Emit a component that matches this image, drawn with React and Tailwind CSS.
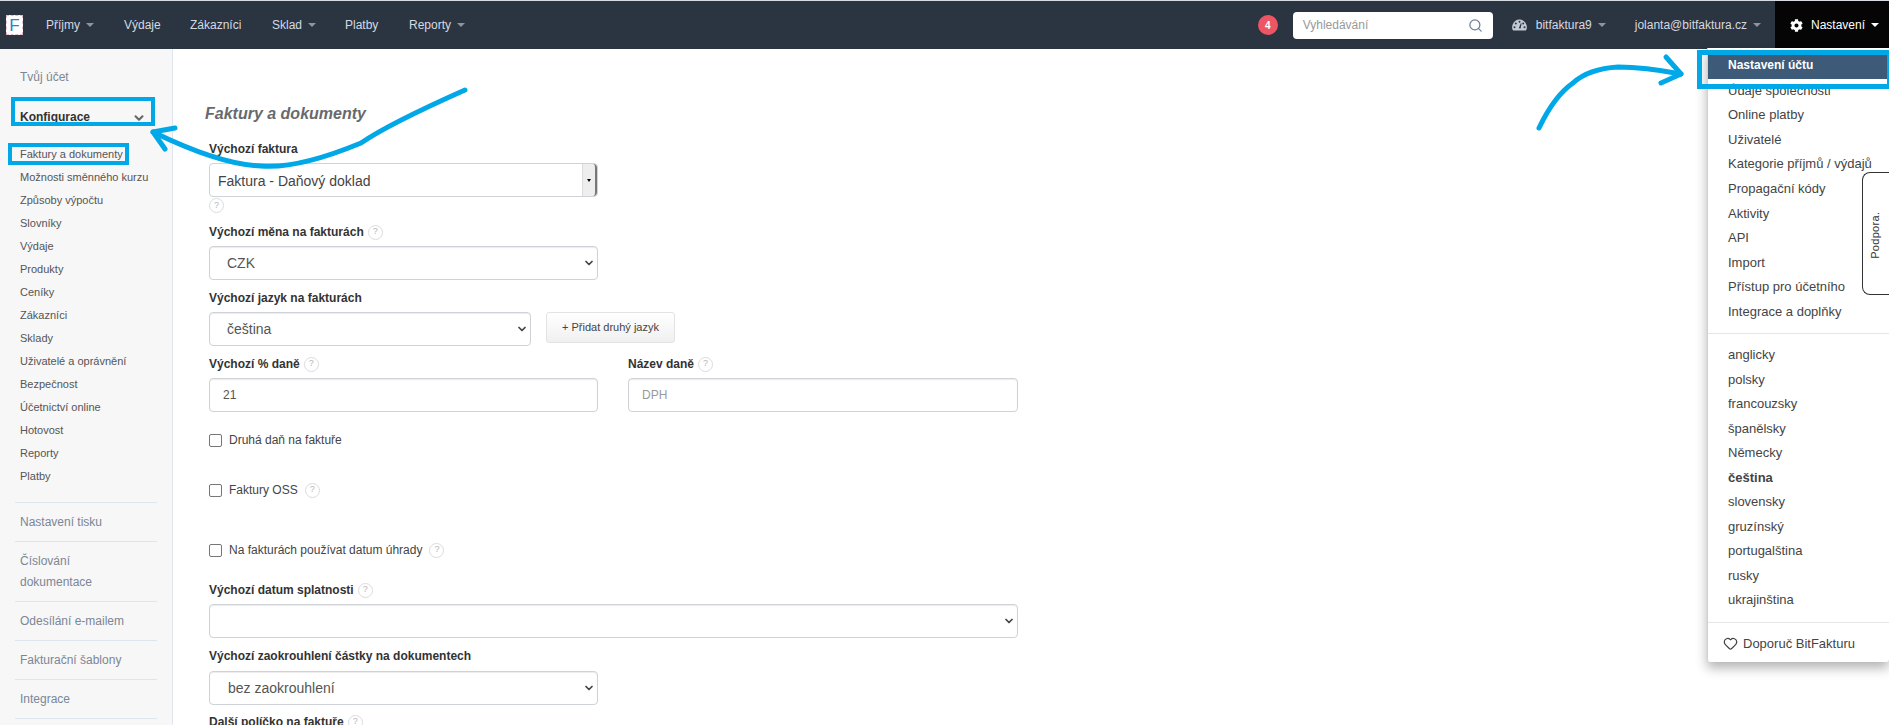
import React from "react";
import { ChevronDown, Heart, Search } from "lucide-react";
import { FaCog } from "react-icons/fa";

const sideConfig = [
    "Možnosti směnného kurzu",
    "Způsoby výpočtu",
    "Slovníky",
    "Výdaje",
    "Produkty",
    "Ceníky",
    "Zákazníci",
    "Sklady",
    "Uživatelé a oprávnění",
    "Bezpečnost",
    "Účetnictví online",
    "Hotovost",
    "Reporty",
    "Platby",
];

const settingsMenu = [
    "Údaje společnosti",
    "Online platby",
    "Uživatelé",
    "Kategorie příjmů / výdajů",
    "Propagační kódy",
    "Aktivity",
    "API",
    "Import",
    "Přístup pro účetního",
    "Integrace a doplňky",
];

const languages = ["anglicky", "polsky", "francouzsky", "španělsky", "Německy", "čeština", "slovensky", "gruzínský", "portugalština", "rusky", "ukrajinština"];

const Caret = ({ className = "border-t-[#8b94a0]" }) => (
    <span className={`inline-block ml-[6px] w-0 h-0 border-x-[4px] border-x-transparent border-t-[4px] ${className}`} />
);

const Dial = () => (
    <svg width="15" height="12" viewBox="0 0 15 12">
        <path d="M1.2 11.5C-.4 9.6 0 6.800 .8 5.200 2 2.300 4.600 .5 7.500 .5s5.500 1.800 6.700 4.700c.8 1.600 1.200 4.400-.4 6.300Z" fill="#c3cad3" />
        <g fill="#2b3441">
            <circle cx="7.500" cy="2.800" r="1" />
            <circle cx="3.800" cy="4.600" r="1" />
            <circle cx="11.200" cy="4.600" r="1" />
            <circle cx="2.500" cy="8.200" r="1" />
            <circle cx="12.500" cy="8.200" r="1" />
            <path d="M8.800 4.200 9.600 4.600 8.600 9.600 6.800 9.200Z" />
        </g>
    </svg>
);

const Help = () => (
    <span className="inline-flex items-center justify-center w-[15px] h-[15px] rounded-full border border-[#dcdcdc] text-[9px] font-normal text-[#b5b5b5] bg-white">?</span>
);

const Label = ({ children, help }) => (
    <div className="flex items-center gap-[4px] h-[16px] text-[12px] font-bold text-[#333]">
        {children}
        {help && <Help />}
    </div>
);

const Field = ({ children, className = "", arrow = true }) => (
    <div className={`flex items-center justify-between h-[34px] border border-[#cfd2d6] rounded-[4px] bg-white shadow-[inset_0_1px_1px_rgba(0,0,0,0.08)] ${className}`}>
        {children}
        {arrow && <ChevronDown size={12} strokeWidth={3.5} className="mr-[2px] ml-auto text-[#444]" />}
    </div>
);

const Check = ({ children, help }) => (
    <div className="flex items-center gap-[7px] h-[16px] text-[12px] text-[#444]">
        <span className="w-[13px] h-[13px] border border-[#767676] rounded-[2px] bg-white" />
        {children}
        {help && <Help />}
    </div>
);

const SideLink = ({ children, lines }) => (
    <div className={`flex items-center text-[12px] text-[#7b8696] border-b border-[#dfe5ee] mx-[15px] px-[5px] ${lines ? "h-[60px] leading-[21px]" : "h-[39px]"}`}>
        <span>{children}</span>
    </div>
);

const App = () => {
    return (
        <div className="relative w-[1889px] h-[725px] overflow-hidden bg-white font-['Liberation_Sans',Arial,sans-serif]">
            {/* Top bar */}
            <header className="flex items-center h-[49px] bg-[#2b3441] border-t border-[#d7dade] text-[12px] text-[#d5dae0]">
                <div className="flex items-center justify-center ml-[6px] w-[17px] h-[20px] bg-white border border-dashed border-[#e7b9c6] text-[#1b87d0] text-[17px] leading-none">F</div>
                <nav className="flex items-center ml-[23px]">
                    <span className="flex items-center w-[78px]">Příjmy<Caret /></span>
                    <span className="w-[66px]">Výdaje</span>
                    <span className="w-[82px]">Zákazníci</span>
                    <span className="flex items-center w-[73px]">Sklad<Caret /></span>
                    <span className="w-[64px]">Platby</span>
                    <span className="flex items-center">Reporty<Caret /></span>
                </nav>
                <div className="flex items-center ml-auto h-full">
                    <span className="flex items-center justify-center w-[20px] h-[20px] rounded-full bg-[#ed5565] text-white text-[10px] font-bold">4</span>
                    <div className="flex items-center justify-between ml-[15px] w-[200px] h-[27px] px-[10px] bg-white rounded-[4px] text-[#999]">
                        <span>Vyhledávání</span>
                        <Search size={15} className="text-[#6f7f92]" />
                    </div>
                    <div className="flex items-center ml-[19px]">
                        <Dial />
                        <span className="ml-[9px]">bitfaktura9</span>
                        <Caret />
                    </div>
                    <div className="flex items-center ml-[29px]">
                        <span>jolanta@bitfaktura.cz</span>
                        <Caret />
                    </div>
                    <div className="flex items-center ml-[14px] w-[114px] h-full pl-[15px] bg-[#050505] text-white">
                        <FaCog size={13} />
                        <span className="ml-[8px]">Nastavení</span>
                        <Caret className="border-t-white" />
                    </div>
                </div>
            </header>

            <div className="flex h-[676px]">
                {/* Side menu */}
                <aside className="w-[173px] shrink-0 bg-[#f7f7f7] border-r border-[#dfe5ee]">
                    <div className="pl-[20px] pt-[20px] h-[56px] text-[12px] leading-[16px] text-[#7b8696]">Tvůj účet</div>
                    <div className="flex items-center justify-between pl-[20px] pr-[26px] h-[24px] text-[12px] font-bold text-[#333]">
                        Konfigurace
                        <ChevronDown size={14} strokeWidth={3.5} className="mt-[1px] text-[#666]" />
                    </div>
                    <ul className="pt-[14px] pl-[20px] text-[11px] text-[#555]">
                        <li className="h-[23px] leading-[23px]">Faktury a dokumenty</li>
                        {sideConfig.map((item) => (
                            <li key={item} className="h-[23px] leading-[23px]">{item}</li>
                        ))}
                    </ul>
                    <div className="mt-[14px] mx-[15px] border-t border-[#dfe5ee]" />
                    <SideLink>Nastavení tisku</SideLink>
                    <SideLink lines>Číslování<br />dokumentace</SideLink>
                    <SideLink>Odesílání e-mailem</SideLink>
                    <SideLink>Fakturační šablony</SideLink>
                    <SideLink>Integrace</SideLink>
                </aside>

                {/* Form */}
                <main className="pl-[36px] pt-[56px] w-[877px]">
                    <h1 className="-ml-[4px] h-[18px] leading-[18px] text-[16px] font-bold italic text-[#676a6c]">Faktury a dokumenty</h1>
                    <div className="mt-[18px]"><Label>Výchozí faktura</Label></div>
                    <div className="mt-[6px] flex items-stretch w-[389px] h-[34px] border border-[#cfd2d6] rounded-[4px] text-[14px] text-[#444]">
                        <span className="flex-1 pl-[8px] leading-[34px]">Faktura - Daňový doklad</span>
                        <span className="flex items-center justify-center w-[15px] bg-[#eee] border-l border-[#ddd] border-r-2 border-r-[#777] rounded-r-[4px]">
                            <span className="w-0 h-0 border-x-[2px] border-x-transparent border-t-[3px] border-t-black" />
                        </span>
                    </div>
                    <div className="mt-[1px] flex h-[15px]"><Help /></div>
                    <div className="mt-[11px]"><Label help>Výchozí měna na fakturách</Label></div>
                    <Field className="mt-[6px] w-[389px] pl-[17px] text-[14px] text-[#555]">CZK</Field>
                    <div className="mt-[10px]"><Label>Výchozí jazyk na fakturách</Label></div>
                    <div className="mt-[6px] flex items-start">
                        <Field className="w-[322px] pl-[17px] text-[14px] text-[#555]">čeština</Field>
                        <button className="ml-[15px] w-[129px] h-[31px] border border-[#e3e3e3] rounded-[3px] bg-gradient-to-b from-white to-[#f0f0f0] text-[11px] text-[#444]">+ Přidat druhý jazyk</button>
                    </div>
                    <div className="mt-[10px] flex gap-[30px]">
                        <div className="w-[389px]"><Label help>Výchozí % daně</Label></div>
                        <div><Label help>Název daně</Label></div>
                    </div>
                    <div className="mt-[6px] flex gap-[30px]">
                        <Field arrow={false} className="w-[389px] pl-[13px] text-[12px] text-[#555]">21</Field>
                        <Field arrow={false} className="w-[390px] pl-[13px] text-[12px] text-[#999]">DPH</Field>
                    </div>
                    <div className="mt-[20px]"><Check>Druhá daň na faktuře</Check></div>
                    <div className="mt-[34px]"><Check help>Faktury OSS</Check></div>
                    <div className="mt-[44px]"><Check help>Na fakturách používat datum úhrady</Check></div>
                    <div className="mt-[24px]"><Label help>Výchozí datum splatnosti</Label></div>
                    <Field className="mt-[6px] w-[809px]" />
                    <div className="mt-[10px]"><Label>Výchozí zaokrouhlení částky na dokumentech</Label></div>
                    <Field className="mt-[7px] w-[389px] pl-[18px] text-[14px] text-[#555]">bez zaokrouhlení</Field>
                    <div className="mt-[9px]"><Label help>Další políčko na faktuře</Label></div>
                </main>
            </div>

            {/* Settings dropdown */}
            <div className="absolute left-[1707px] top-[48px] w-[182px] h-[614px] pt-[5px] bg-white rounded-b-[3px] border-l border-[#d0d0d0] shadow-[0_6px_12px_rgba(0,0,0,0.3)] text-[13px] text-[#444]">
                <div className="flex items-center h-[26px] -mb-[1px] pb-[2px] pl-[20px] mr-[2px] bg-[#3d5a78] text-[12px] font-bold text-white">Nastavení účtu</div>
                {settingsMenu.map((item) => (
                    <div key={item} className="flex items-center h-[24.6px] pl-[20px]">{item}</div>
                ))}
                <div className="mt-[9px] mb-[9px] border-t border-[#e6e6e6]" />
                {languages.map((item) => (
                    <div key={item} className={`flex items-center h-[24.5px] pl-[20px] ${item === "čeština" ? "font-bold" : ""}`}>{item}</div>
                ))}
                <div className="mt-[10px] border-t border-[#e6e6e6]" />
                <div className="flex items-center h-[40px] pl-[15px] gap-[5px]">
                    <Heart size={15} />
                    Doporuč BitFakturu
                </div>
            </div>

            {/* Support tab */}
            <div className="absolute left-[1862px] top-[172px] flex items-center justify-center w-[27px] h-[123px] pt-[3px] bg-white border border-r-0 border-[#333] rounded-l-[8px]">
                <span className="-rotate-90 whitespace-nowrap text-[11px] tracking-[0.3px] text-[#333]">Podpora.</span>
            </div>

            {/* Highlight frames and arrows drawn over the screenshot */}
            <div className="absolute left-[11px] top-[97px] w-[144px] h-[29px] border-4 border-[#00a8e8]" />
            <div className="absolute left-[8px] top-[143px] w-[121px] h-[22px] border-4 border-[#00a8e8]" />
            <div className="absolute left-[1697px] top-[50px] w-[192px] h-[39px] border-[5px] border-r-[2px] border-[#00a8e8]" />
            <svg className="absolute left-0 top-0 pointer-events-none" width="1889" height="725" fill="none" stroke="#00a8e8" strokeWidth="5" strokeLinecap="round" strokeLinejoin="round">
                <path d="M465 90C420 110 380 130 361 143C320 160 285 168 261 166C230 165 190 150 153 132" />
                <path d="M175 128L153 132L165 149" />
                <path d="M1539 128C1550 105 1560 92 1573 83C1585 72 1600 68 1618 67C1640 67 1660 70 1681 74" />
                <path d="M1666 57L1681 74L1661 83" />
            </svg>
        </div>
    );
};

export default App;
